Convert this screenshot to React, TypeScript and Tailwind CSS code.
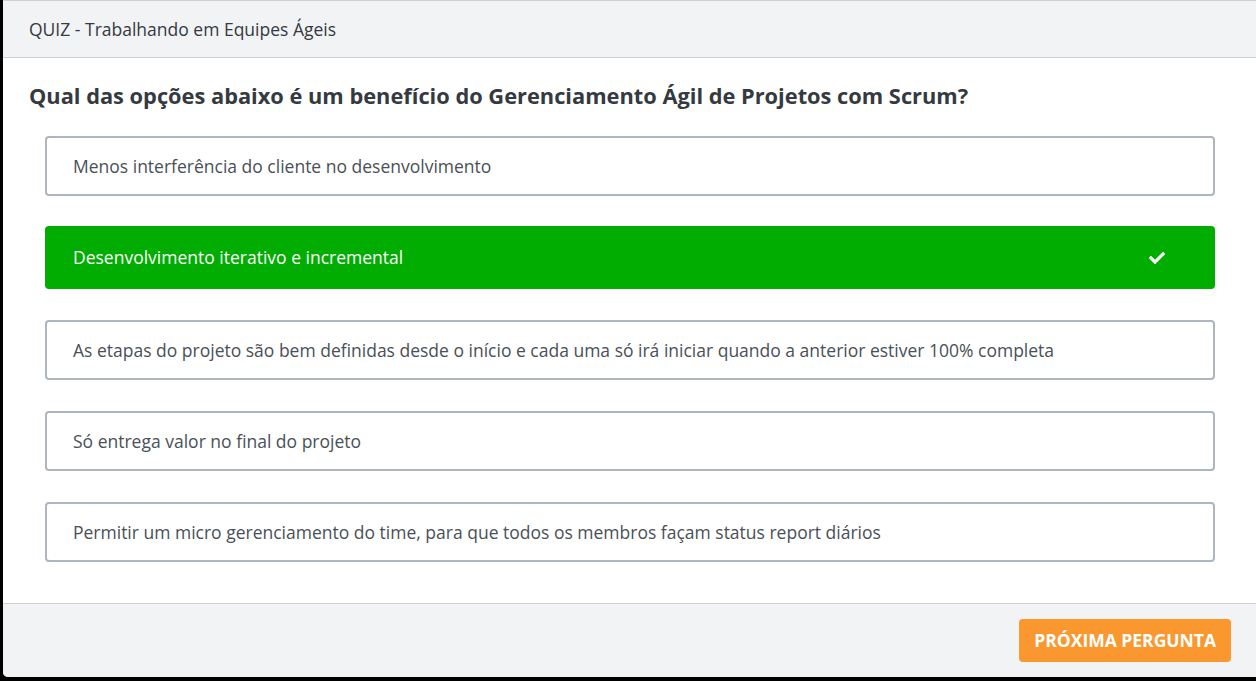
import React from 'react';

const CheckIcon = () => (
  <svg viewBox="0 0 512 512" className="h-[16px] w-[16px]" fill="currentColor">
    <path d="M173.898 439.404l-166.4-166.4c-9.997-9.997-9.997-26.206 0-36.204l36.203-36.204c9.997-9.998 26.207-9.998 36.204 0L192 312.69 432.095 72.596c9.997-9.997 26.207-9.997 36.204 0l36.203 36.204c9.997 9.997 9.997 26.206 0 36.204l-294.4 294.401c-9.998 9.997-26.207 9.997-36.204-.001z" />
  </svg>
);

const options = [
  'Menos interferência do cliente no desenvolvimento',
  'Desenvolvimento iterativo e incremental',
  'As etapas do projeto são bem definidas desde o início e cada uma só irá iniciar quando a anterior estiver 100% completa',
  'Só entrega valor no final do projeto',
  'Permitir um micro gerenciamento do time, para que todos os membros façam status report diários',
];

export default function App() {
  const selected = 1;

  return (
    <div
      className="w-[1256px] h-[681px] bg-black pl-[3px] overflow-hidden"
      style={{ fontFamily: '"Open Sans", "Noto Sans", sans-serif' }}
    >
      <div className="w-[1260px] h-[677px] bg-white rounded-bl-[5px] flex flex-col overflow-hidden">
        <div className="h-[58px] shrink-0 bg-[#f2f3f5] border-t border-b border-[#cdd0d4] flex items-center pl-[26px] text-[17.5px] text-[#343a40]">
          QUIZ - Trabalhando em Equipes Ágeis
        </div>

        <div className="flex-1 pl-[26px] pr-[48px]">
          <h2 className="mt-[22px] text-[21.8px] font-bold text-[#343a40] leading-[32px]">
            Qual das opções abaixo é um benefício do Gerenciamento Ágil de Projetos com Scrum?
          </h2>
          <div className="mt-[24px] pl-[16px] flex flex-col gap-[31px]">
            {options.map((opt, i) =>
              i === selected ? (
                <div
                  key={i}
                  className="h-[63px] -mt-[1px] rounded-[4px] bg-[#00ad00] text-white text-[17.5px] flex items-center justify-between pl-[28px] pr-[50px]"
                >
                  <span>{opt}</span>
                  <CheckIcon />
                </div>
              ) : (
                <div
                  key={i}
                  className="h-[60px] rounded-[4px] border-2 border-[#adb5bd] text-[#495057] text-[17.5px] flex items-center pl-[26px]"
                >
                  {opt}
                </div>
              )
            )}
          </div>
        </div>

        <div className="h-[74px] shrink-0 bg-[#f2f3f5] border-t border-[#cdd0d4] flex items-center justify-end pr-[32px]">
          <button className="h-[43px] px-[15px] rounded-[4px] bg-[#fa982f] text-white font-bold text-[17.5px] uppercase">
            Próxima Pergunta
          </button>
        </div>
      </div>
    </div>
  );
}
